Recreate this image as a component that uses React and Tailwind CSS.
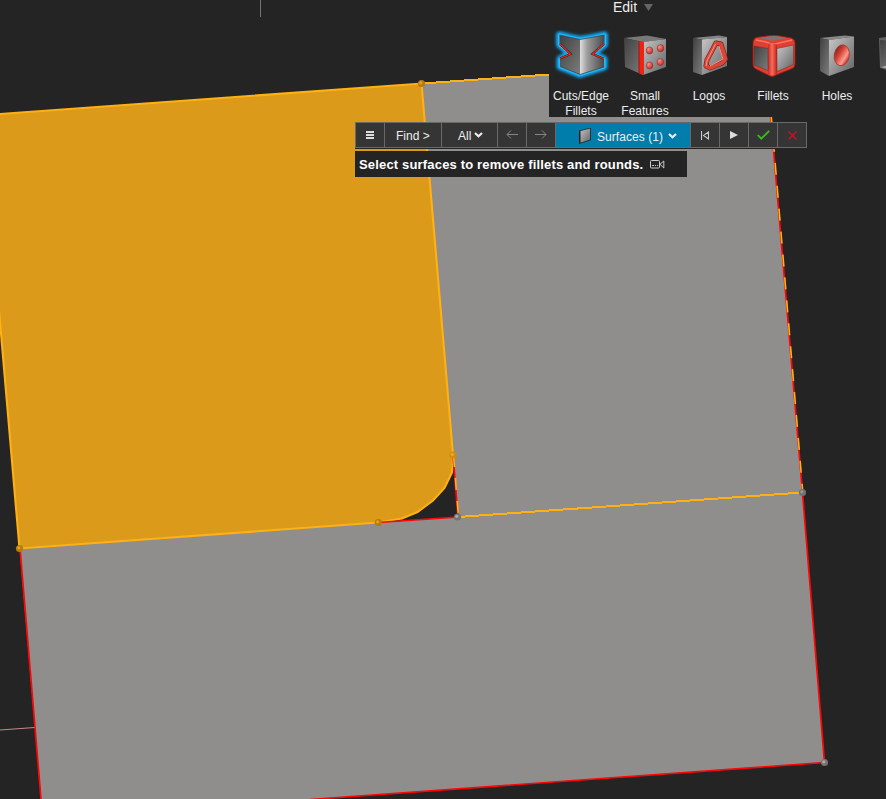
import React from "react";

function Node({ x, y, fill, light }) {
  return (
    <g>
      <circle cx={x} cy={y} r="3.6" fill={fill} />
      <circle cx={x - 0.7} cy={y - 0.7} r="1.6" fill={light} />
    </g>
  );
}

function Viewport() {
  return (
    <svg className="absolute inset-0" width="886" height="799" viewBox="0 0 886 799" fill="none">
      <path d="M421.5 83.5L766 59L802.5 492.5L824.5 762.5L310 799.5H41L19.5 548.5L378 522.5L458 517L453 455Z" fill="#8f8e8c" />
      <path d="M378 522.5L458 517L453 455L430 495Z" fill="#242424" />
      <path d="M-1 114L421.5 83.5L453 455C453 462 452.5 469 451.8 473L444.5 488L433 500.5L417.5 512L402 518.5L378 522.5L19.5 548.5L-1 310Z" fill="#db9a19" />
      <path d="M-1 114L421.5 83.5L453 455C453 462 452.5 469 451.8 473L444.5 488L433 500.5L417.5 512L402 518.5L378 522.5L19.5 548.5L-1 310" stroke="#ffb012" strokeWidth="2.1" />
      <path d="M421.5 83.5L549 74.5M458 517L802.5 492.5" stroke="#ffb012" strokeWidth="2" shapeRendering="crispEdges" />
      <path d="M378 522.5L458 517L453 455M770.8 117L802.5 492.5L824.5 762.5L310 799.5M20 548.5L41 799" stroke="#ff0505" strokeWidth="1.7" />
      <path d="M771.3 117L802.8 492.5M453.5 455L458.5 517" stroke="#ffb012" strokeWidth="1.6" strokeDasharray="12 11" />
      <path d="M0 730L34.5 727.5" stroke="#c98783" strokeWidth="1.2" />
      <path d="M260.5 0V17" stroke="#747474" />
      <Node x={421.5} y={83.5} fill="#b77b0b" light="#e0a128" />
      <Node x={453} y={455} fill="#d28d10" light="#e8a82c" />
      <Node x={378.3} y={522.5} fill="#b77b0b" light="#e0a128" />
      <Node x={19.5} y={548.5} fill="#b77b0b" light="#e0a128" />
      <Node x={457.5} y={517} fill="#737373" light="#aaaaaa" />
      <Node x={802.5} y={492.5} fill="#707070" light="#969696" />
      <Node x={824.5} y={762.5} fill="#737373" light="#aaaaaa" />
    </svg>
  );
}

function Gradients() {
  return (
    <svg className="absolute" width="0" height="0">
      <defs>
        <linearGradient id="dark" x1="0" y1="0" x2="1" y2="1">
          <stop stopColor="#404040" />
          <stop offset="1" stopColor="#7c7c7c" />
        </linearGradient>
        <linearGradient id="metal" x1="0" y1="0" x2="1" y2="1">
          <stop stopColor="#c8c8c8" />
          <stop offset="1" stopColor="#626262" />
        </linearGradient>
        <linearGradient id="bend" x1="0" y1="0" x2="1" y2="0">
          <stop stopColor="#dedede" />
          <stop offset="0.3" stopColor="#9b9b9b" />
          <stop offset="1" stopColor="#484848" />
        </linearGradient>
        <linearGradient id="red" x1="0" y1="0" x2="1" y2="0">
          <stop stopColor="#c32c20" />
          <stop offset="0.45" stopColor="#fa6a5b" />
          <stop offset="1" stopColor="#bd2519" />
        </linearGradient>
        <radialGradient id="ball" cx="0.35" cy="0.3" r="0.8">
          <stop stopColor="#ff9186" />
          <stop offset="1" stopColor="#b51e17" />
        </radialGradient>
        <linearGradient id="bore" x1="0" y1="0" x2="1" y2="0.6">
          <stop stopColor="#541c18" />
          <stop offset="0.45" stopColor="#d64032" />
          <stop offset="0.8" stopColor="#ff9c90" />
          <stop offset="1" stopColor="#cc3528" />
        </linearGradient>
        <filter id="glow" x="-30%" y="-30%" width="160%" height="160%">
          <feGaussianBlur stdDeviation="1.5" />
        </filter>
      </defs>
    </svg>
  );
}

const bentOutline = "M13 5Q24 8 33.5 9.5Q46 8 58 5V14.5L46 24L57.5 29V37L33.5 44.5L13.5 36.5V29L24 24L13 14.5Z";

function CutsIcon() {
  return (
    <g>
      <path d={bentOutline} fill="#18b8ff" stroke="#10aaf5" strokeWidth="7" strokeLinejoin="round" filter="url(#glow)" />
      <path d={bentOutline} stroke="#22baff" strokeWidth="3" strokeLinejoin="round" />
      <path d="M13 5L33.5 9.5V44.5L13.5 36.5V29L24 24L13 14.5Z" fill="url(#dark)" />
      <path d="M33.5 9.5L58 5V14.5L46 24L57.5 29V37L33.5 44.5Z" fill="url(#bend)" />
      <path d="M13 5L33.5 9.5L58 5M13.5 36.5L33.5 44.5L57.5 37" stroke="#303c42" strokeWidth="0.7" />
      <path d="M13.5 14L24 24L13.5 28.5M57.5 14L46 24L57 28.5" stroke="#521714" strokeWidth="2.3" />
      <path d="M13.5 14L24 24L13.5 28.5M57.5 14L46 24L57 28.5" stroke="#df2a20" strokeWidth="1.3" />
    </g>
  );
}

function SmallIcon() {
  return (
    <>
      <path d="M11 8L34 5.5L53 9L30 12Z" fill="#787878" />
      <path d="M11 8L30 12V45L12 37Z" fill="url(#dark)" />
      <path d="M30 12L53 9V37L30 45Z" fill="url(#metal)" />
      <path d="M26 11L31 12V45L26 43Z" fill="#ed2411" />
      <path d="M26 11V43" stroke="#961a12" />
      {[[36.5, 20.5], [47.5, 18.2], [36.5, 35.5], [47.3, 32]].map(([x, y]) => (
        <ellipse key={x + "-" + y} cx={x} cy={y} rx="3.3" ry="3.6" fill="url(#ball)" stroke="#8d3530" strokeWidth="0.6" />
      ))}
    </>
  );
}

function LogosIcon() {
  return (
    <>
      <path d="M16 8L42 5.5L50 7L25 9.5Z" fill="#858585" />
      <path d="M16 8L25 9.5V45L16 42Z" fill="url(#dark)" />
      <path d="M25 9.5L50 7V36L25 45Z" fill="url(#metal)" />
      <path d="M39 13L44 14L48.5 29L45 33L33 38L29 36L30 30Z" stroke="#792019" strokeWidth="5" strokeLinejoin="round" />
      <path d="M39 13L44 14L48.5 29L45 33L33 38L29 36L30 30Z" stroke="#dc4639" strokeWidth="3.8" strokeLinejoin="round" />
      <path d="M38.5 14L30 31L29 36M42 16L46 29L33 36" stroke="#ff9085" strokeWidth="1" />
    </>
  );
}

function FilletsIcon() {
  return (
    <>
      <path d="M15 7.5Q12 9 12 13V34Q12 38 15 39L27 45Q31 48 35 45L50 39Q54 38 54 34V13Q54 9 50 8L36 5.5H29Z" fill="#df3f30" stroke="#9c1d15" strokeWidth="0.8" />
      <path d="M15 10Q23 11 30 14H34L51 10" stroke="#ff7065" strokeWidth="1.5" />
      <path d="M27 14Q31 12 36 15V44Q31 47 27 44Z" fill="url(#red)" />
      <path d="M18 8.2L33 5.8L46 8L31 10.8Z" fill="#777" />
      <path d="M13 16L27 18.5V40.5L13 35Z" fill="url(#dark)" stroke="#762721" strokeWidth="0.5" />
      <path d="M36 18.5L52.5 15V34.5L36 41.5Z" fill="url(#metal)" stroke="#762721" strokeWidth="0.5" />
    </>
  );
}

function HolesIcon() {
  return (
    <>
      <path d="M15 8L40 5.5L49 6.5L24 10Z" fill="#898989" />
      <path d="M15 8L24 10V46L15 41Z" fill="url(#dark)" />
      <path d="M24 10L49 6.5V37L24 46Z" fill="url(#metal)" />
      <ellipse cx="36.8" cy="25.3" rx="7.5" ry="10.5" fill="url(#bore)" stroke="#9f3930" strokeWidth="0.8" transform="rotate(10 36.8 25.3)" />
    </>
  );
}

function RibbonItem({ lines, x = 0, children }) {
  return (
    <div className="flex w-16 shrink-0 flex-col items-center text-center text-xs leading-[15px] text-[#eeeeee]">
      <svg className="shrink-0" width="64" height="50" viewBox={`${x} 0 64 50`} fill="none">{children}</svg>
      <div className="mt-[9px] whitespace-nowrap">
        {lines.map((l) => <div key={l}>{l}</div>)}
      </div>
    </div>
  );
}

function Ribbon() {
  return (
    <div className="absolute left-[549px] top-0 flex h-[117px] w-[337px] flex-col bg-[#242424]">
      <div className="flex h-[30px] shrink-0 items-start pl-16 text-[14px] leading-[14px] text-[#eeeeee]">
        <span>Edit</span>
        <svg className="ml-[7px] mt-1" width="9" height="8" viewBox="0 0 9 8"><path d="M0 0H9L4.5 7Z" fill="#656565" /></svg>
      </div>
      <div className="flex h-[87px]">
        <RibbonItem x={2.5} lines={["Cuts/Edge", "Fillets"]}><CutsIcon /></RibbonItem>
        <RibbonItem lines={["Small", "Features"]}><SmallIcon /></RibbonItem>
        <RibbonItem lines={["Logos"]}><LogosIcon /></RibbonItem>
        <RibbonItem lines={["Fillets"]}><FilletsIcon /></RibbonItem>
        <RibbonItem lines={["Holes"]}><HolesIcon /></RibbonItem>
        <RibbonItem lines={[]}>
          <path d="M10 8L30 5L52 8V37L31 44L11 38Z" fill="#626262" />
          <path d="M11 10L31 12V33L12 36Z" fill="url(#dark)" />
          <path d="M12 37L31 32V43Z" fill="#aaa" />
        </RibbonItem>
      </div>
    </div>
  );
}

function Cell({ className, children }) {
  return <div className={"flex h-full shrink-0 items-center border-r border-[#696969] " + className}>{children}</div>;
}

function Chevron() {
  return <svg width="9" height="6" viewBox="0 0 9 6" fill="none"><path d="M1 1L4.5 4.2L8 1" stroke="#eee" strokeWidth="2.2" /></svg>;
}

function Toolbar() {
  return (
    <div className="absolute left-[355px] top-[122px] flex flex-col items-start">
      <div className="flex h-[26px] w-[452px] border-y border-l border-[#696969] bg-[#353535] text-xs text-[#eeeeee] shadow-[0_1px_0_#242424]">
        <Cell className="w-[29px] justify-center">
          <svg width="9" height="9" viewBox="0 0 9 9"><path d="M0 0H8V2H0ZM0 3H8V5H0ZM0 6H8V8H0Z" fill="#ddd" /></svg>
        </Cell>
        <Cell className="w-[57px] pl-[11px]"><span className="pt-0.5">Find &gt;</span></Cell>
        <Cell className="w-14 gap-[3px] pl-4"><span className="pt-0.5">All</span><Chevron /></Cell>
        <Cell className="w-[29px] justify-center">
          <svg width="12" height="9" viewBox="0 0 12 9" fill="none" className="-mt-0.5"><path d="M12 4.5H1M5 .5L1 4.5L5 8.5" stroke="#858585" /></svg>
        </Cell>
        <Cell className="w-[29px] justify-center">
          <svg width="12" height="9" viewBox="0 0 12 9" fill="none" className="-mt-0.5"><path d="M0 4.5H11M7 .5L11 4.5L7 8.5" stroke="#858585" /></svg>
        </Cell>
        <Cell className="w-[135px] bg-[#007dab] pl-[23px]">
          <svg className="mt-px" width="12" height="16" viewBox="0 0 12 16"><path d="M0 3L11.5 0V12L0 15.5Z" fill="url(#metal)" stroke="#222" strokeWidth="0.8" /><path d="M0 3L1.5 2.7V15L0 15.5Z" fill="#222" /></svg>
          <span className="ml-1.5 mt-[3px] w-[66px] whitespace-nowrap text-xs leading-4 tracking-[0.05px]">Surfaces (1)</span>
          <span className="ml-[5px] mt-0.5 flex"><Chevron /></span>
        </Cell>
        <Cell className="w-[29px] justify-center">
          <svg width="9" height="9" viewBox="0 0 9 9" fill="none"><path d="M.5 0V9M7.5 1L2.5 4.5L7.5 8Z" stroke="#ccc" strokeWidth="1.1" /></svg>
        </Cell>
        <Cell className="w-[29px] justify-center">
          <svg width="8" height="8" viewBox="0 0 8 8"><path d="M0 0L8 4L0 8Z" fill="#ddd" /></svg>
        </Cell>
        <Cell className="w-[29px] justify-center">
          <svg width="13" height="10" viewBox="0 0 13 10" fill="none"><path d="M.8 5L4.3 8.7L12.2 .8" stroke="#3dbd1b" strokeWidth="1.8" /></svg>
        </Cell>
        <Cell className="w-[29px] justify-center">
          <svg width="9" height="9" viewBox="0 0 9 9" fill="none"><path d="M.5 .5L8.5 8.5M8.5 .5L.5 8.5" stroke="#cc1028" strokeWidth="1.3" /></svg>
        </Cell>
      </div>
      <div className="mt-[3px] flex h-[26px] w-[332px] items-center bg-[#242424] pl-1 text-[13px] font-bold text-white">
        <span className="w-[284px] whitespace-nowrap pt-0.5 tracking-[0.17px]">Select surfaces to remove fillets and rounds.</span>
        <svg className="ml-[7px]" width="15" height="9" viewBox="0 0 15 9" fill="none">
          <rect x=".5" y=".5" width="9" height="7.5" rx="1" stroke="#ccc" />
          <path d="M2 5.5H4M5 5.5H6M7 5.5H8M10 4.3L13.8 1V8L10 4.3" stroke="#ccc" />
        </svg>
      </div>
    </div>
  );
}

export default function App() {
  return (
    <main className="relative h-[799px] w-[886px] overflow-hidden bg-[#242424] font-['Liberation_Sans',Arial,sans-serif]">
      <Gradients />
      <Viewport />
      <Ribbon />
      <Toolbar />
    </main>
  );
}
